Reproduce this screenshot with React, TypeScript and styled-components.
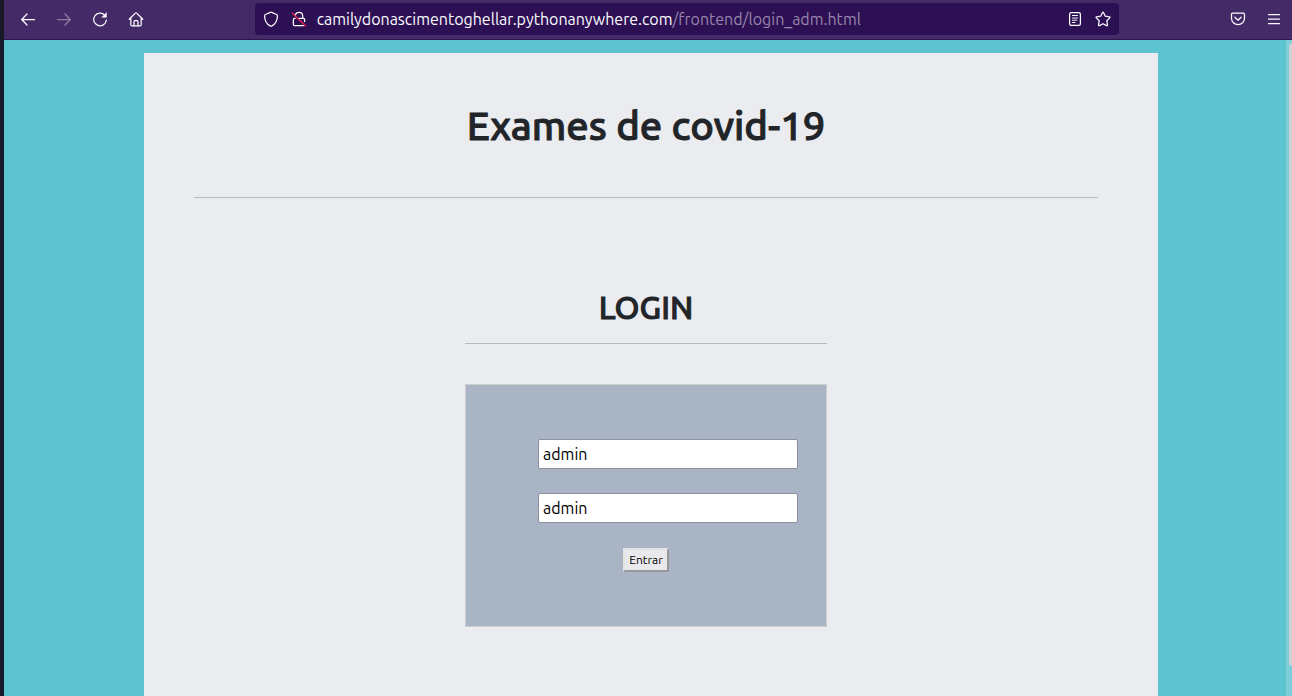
import React from "react";
import styled, { createGlobalStyle } from "styled-components";

const GlobalStyle = createGlobalStyle`
  *, *::before, *::after { box-sizing: border-box; }
  html, body { margin: 0; padding: 0; height: 100%; overflow: hidden; }
  #root { height: 100%; }
  body { font-family: Ubuntu, "Noto Sans", "Open Sans", sans-serif; color: #212529; }
`;

const Window = styled.div`
  display: flex;
  flex-direction: column;
  height: 100vh;
  border-left: 4px solid #191a28;
`;

const Toolbar = styled.header`
  display: flex;
  align-items: center;
  flex: none;
  height: 40px;
  padding: 0 0 2px 6px;
  background: #452a68;
  border-bottom: 1px solid #2b1650;
`;

const Spring = styled.div`
  flex: 101 1 0;
`;

const IconButton = styled.button<{ $width?: number }>`
  display: flex;
  align-items: center;
  justify-content: center;
  flex: none;
  width: ${({ $width = 36 }) => $width}px;
  height: 32px;
  padding: 0;
  border: 0;
  background: none;
  color: #fbfbfe;
  &:disabled { opacity: 0.4; }
`;

const AddressBar = styled.div`
  display: flex;
  align-items: center;
  flex: 864 1 0;
  min-width: 0;
  height: 32px;
  padding: 0 2px;
  border-radius: 4px;
  background: #2d1054;
`;

const Address = styled.div`
  flex: 1;
  min-width: 0;
  padding-left: 4px;
  overflow: hidden;
  white-space: nowrap;
  font-size: 16px;
  line-height: 24px;
  color: #fbfbfe;
`;

const Path = styled.span`
  color: #9585aa;
`;

const Viewport = styled.div`
  display: flex;
  flex: 1;
  min-height: 0;
  background: #5dc3cf;
`;

const Page = styled.main`
  flex: 1;
  min-width: 0;
  margin: 13px 128px 0 140px;
  padding: 49px 60px 0 50px;
  background: #ebecf0;
`;

const ScrollTrack = styled.div`
  flex: none;
  width: 6px;
  padding: 3px 0 30px 3px;
  background: #7dced8;
`;

const ScrollThumb = styled.div`
  height: 100%;
  border-radius: 4px 0 0 4px;
  background: #d0cfd3;
`;

const Title = styled.h1`
  margin: 0;
  font-size: 40px;
  font-weight: 500;
  line-height: 48px;
  text-align: center;
  -webkit-text-stroke: 1px currentColor;
`;

const Rule = styled.hr<{ $top: number; $bottom: number }>`
  height: 1px;
  margin: ${({ $top }) => $top}px 0 ${({ $bottom }) => $bottom}px;
  border: 0;
  background: #b8babd;
`;

const LoginPanel = styled.section`
  width: 362px;
  max-width: 100%;
  margin: 0 auto;
`;

const Subtitle = styled.h2`
  margin: 0;
  font-size: 32px;
  font-weight: 500;
  line-height: 40px;
  text-align: center;
  -webkit-text-stroke: 1px currentColor;
`;

const Form = styled.form`
  display: flex;
  flex-direction: column;
  gap: 24px;
  padding: 54px 28px 54px 72px;
  border: 1px solid #cccdcf;
  background: #a9b4c4;
`;

const Field = styled.input`
  width: 100%;
  height: 30px;
  padding: 0 4px;
  border: 1px solid #8f8f9d;
  border-radius: 2px;
  background: #fff;
  color: #000;
  font-family: inherit;
  font-size: 16px;
`;

const Actions = styled.div`
  display: flex;
  justify-content: center;
  margin: 0 16px 0 -28px;
  padding-top: 1px;
`;

const Submit = styled.button`
  height: 24px;
  padding: 0 4px;
  border: 2px solid;
  border-color: #e3e3e3 #979797 #979797 #e3e3e3;
  background: #e9e9ed;
  color: #000;
  font-family: inherit;
  font-size: 12px;
  line-height: 20px;
`;

const Icon = ({ children }: { children: React.ReactNode }) => (
  <svg
    width="16"
    height="16"
    viewBox="0 0 16 16"
    fill="none"
    stroke="currentColor"
    strokeWidth="1.25"
    strokeLinecap="round"
    strokeLinejoin="round"
    aria-hidden="true"
  >
    {children}
  </svg>
);

export default function App() {
  return (
    <Window>
      <GlobalStyle />
      <Toolbar>
        <IconButton aria-label="Voltar">
          <Icon>
            <path d="M14.5 8.5H2M7 3L1.7 8.5L7 14" />
          </Icon>
        </IconButton>
        <IconButton aria-label="Avançar" disabled>
          <Icon>
            <path d="M1.5 8.5H14M9 3L14.3 8.5L9 14" />
          </Icon>
        </IconButton>
        <IconButton aria-label="Recarregar">
          <Icon>
            <path d="M12.8 4.4A6.3 6.3 0 1 0 14.3 9.2" />
            <path d="M14.4 2V6.2H10.2Z" fill="currentColor" strokeWidth="0.6" />
          </Icon>
        </IconButton>
        <IconButton aria-label="Página inicial">
          <Icon>
            <path d="M1.2 8.3L7.3 2.1Q8 1.4 8.7 2.1L14.8 8.3M2.8 7V13.7Q2.8 14.9 4 14.9H12Q13.2 14.9 13.2 13.7V7" />
            <path d="M6 14.8V10.6Q6 9.5 7 9.5H9Q10 9.5 10 10.6V14.8" />
          </Icon>
        </IconButton>
        <Spring />
        <AddressBar>
          <IconButton $width={28} aria-label="Proteção contra rastreamento">
            <Icon>
              <path d="M8 1.2Q8.6 1.2 9.2 1.6L13.6 3.5Q14.4 3.8 14.4 4.7Q14.5 11.6 8.9 14.9Q8 15.4 7.1 14.9Q1.5 11.6 1.6 4.7Q1.6 3.8 2.4 3.5L6.8 1.6Q7.4 1.2 8 1.2Z" />
            </Icon>
          </IconButton>
          <IconButton $width={28} aria-label="Conexão não segura">
            <Icon>
              <path d="M4.3 4.2Q4.9 1.3 8 1.3Q11.7 1.3 11.7 5V7.3H12.4Q13.6 7.3 13.6 8.5V10.6M7.6 7.3H11.7M4.2 7.3H3.6Q2.4 7.3 2.4 8.5V13.5Q2.4 14.7 3.6 14.7H12.4" />
              <path d="M1.4 2.2L14.6 15" stroke="#e22850" strokeWidth="1.4" />
            </Icon>
          </IconButton>
          <Address>
            camilydonascimentoghellar.pythonanywhere.com
            <Path>/frontend/login_adm.html</Path>
          </Address>
          <IconButton $width={28} aria-label="Modo de leitura">
            <Icon>
              <rect x="2.6" y="1.6" width="10.8" height="12.8" rx="1.6" />
              <path d="M5.5 4.5H10.5M5.5 7H10.5M5.5 9.2H9.8M5.5 11.5H8" strokeWidth="1" />
            </Icon>
          </IconButton>
          <IconButton $width={28} aria-label="Adicionar aos favoritos">
            <Icon>
              <path d="M7.4 1.7Q8 .6 8.6 1.7L10.3 5.2L14.3 5.8Q15.5 6 14.7 6.9L11.8 9.8L12.5 13.9Q12.6 15.1 11.5 14.6L8 12.7L4.5 14.6Q3.4 15.1 3.5 13.9L4.2 9.8L1.3 6.9Q.5 6 1.7 5.8L5.7 5.2Z" />
            </Icon>
          </IconButton>
        </AddressBar>
        <Spring />
        <IconButton aria-label="Salvar no Pocket">
          <Icon>
            <path d="M2.6 2.2H13.4Q14.5 2.2 14.5 3.3V7.2A6.5 6.5 0 0 1 1.5 7.2V3.3Q1.5 2.2 2.6 2.2Z" />
            <path d="M4.9 6.2L8 9.2L11.1 6.2" />
          </Icon>
        </IconButton>
        <IconButton aria-label="Abrir menu">
          <Icon>
            <path d="M2.5 3.5H13.5M2.5 8H13.5M2.5 12.5H13.5" />
          </Icon>
        </IconButton>
      </Toolbar>
      <Viewport>
        <Page>
          <Title>Exames de covid-19</Title>
          <Rule $top={47} $bottom={89} />
          <LoginPanel>
            <Subtitle>LOGIN</Subtitle>
            <Rule $top={16} $bottom={40} />
            <Form onSubmit={(event) => event.preventDefault()}>
              <Field type="text" aria-label="Usuário" defaultValue="admin" />
              <Field type="text" aria-label="Senha" defaultValue="admin" />
              <Actions>
                <Submit type="submit">Entrar</Submit>
              </Actions>
            </Form>
          </LoginPanel>
        </Page>
        <ScrollTrack>
          <ScrollThumb />
        </ScrollTrack>
      </Viewport>
    </Window>
  );
}
